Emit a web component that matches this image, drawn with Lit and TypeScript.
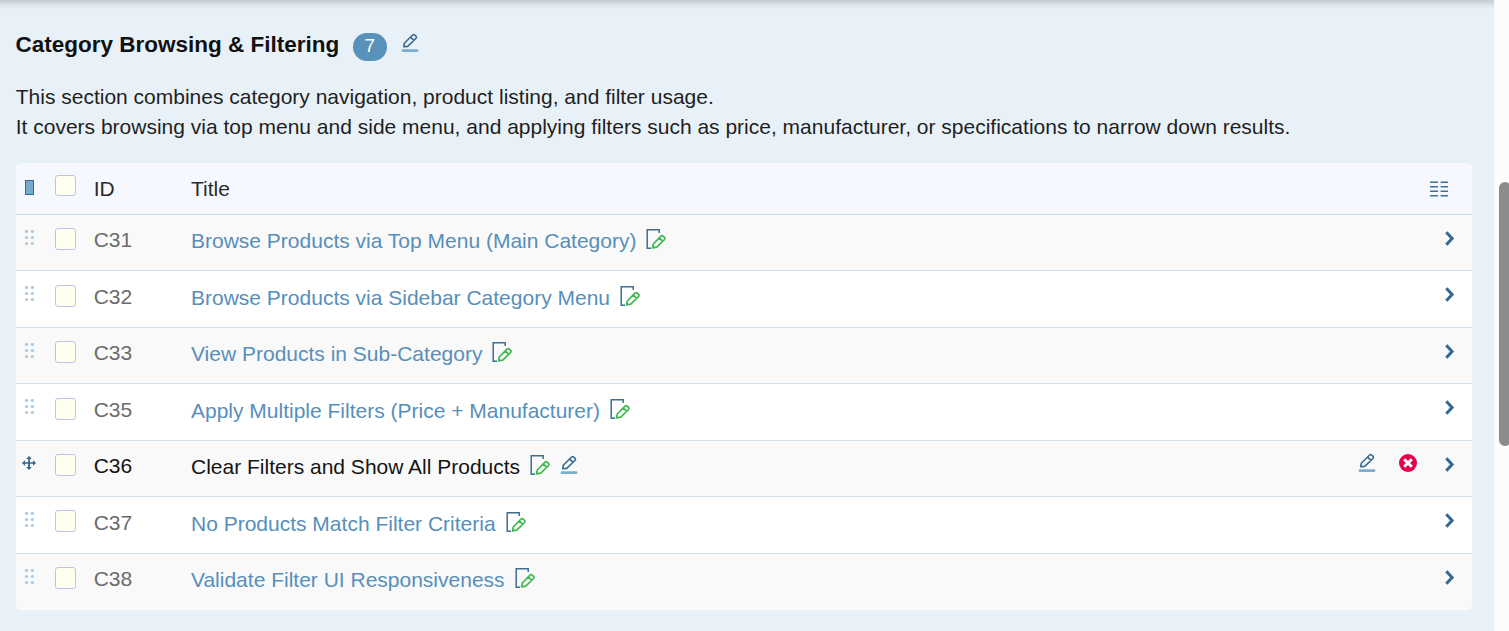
import { LitElement, html, css, svg, nothing } from "lit";
import { customElement, property } from "lit/decorators.js";

interface TestCase {
  id: string;
  title: string;
  active?: boolean;
}

const CASES: TestCase[] = [
  { id: "C31", title: "Browse Products via Top Menu (Main Category)" },
  { id: "C32", title: "Browse Products via Sidebar Category Menu" },
  { id: "C33", title: "View Products in Sub-Category" },
  { id: "C35", title: "Apply Multiple Filters (Price + Manufacturer)" },
  { id: "C36", title: "Clear Filters and Show All Products", active: true },
  { id: "C37", title: "No Products Match Filter Criteria" },
  { id: "C38", title: "Validate Filter UI Responsiveness" },
];

const pencil = html`<svg width="18" height="20" viewBox="0 0 18 20" fill="none">
  <path d="M2.8 13.8 3.3 10.2 11.6 2Q12.6 1.1 13.6 2L15.1 3.4Q16 4.3 15.1 5.2L6.7 13.4Z M9.6 4.2 13 7.4" stroke="#3a6a8e" stroke-width="1.6" stroke-linejoin="round"/>
  <path d="M2 17.6H16" stroke="#7badcf" stroke-width="2.8" stroke-linecap="round"/>
</svg>`;

const sheet = html`<svg width="22" height="22" viewBox="0 0 22 22" fill="none">
  <path d="M6 20.2H2.2V1.8H14.2V5" stroke="#3f6d92" stroke-width="1.5"/>
  <path d="M7.6 19.8 8.3 16 16 8.2Q17.1 7.2 18.2 8.2L19.6 9.5Q20.6 10.5 19.6 11.5L11.7 19.2Z M14.2 10 17.8 13.4" stroke="#3dbb50" stroke-width="1.75" stroke-linejoin="round"/>
</svg>`;

const chevron = html`<svg width="12" height="18" viewBox="0 0 12 18" fill="none">
  <path d="M2.3 2.3 8.1 8.5 2.3 14.7" stroke="#346891" stroke-width="3"/>
</svg>`;

const remove = html`<svg width="18" height="18" viewBox="0 0 18 18">
  <circle cx="9" cy="9" r="9" fill="#e4004b"/>
  <path d="M5.2 5.2 12.8 12.8M12.8 5.2 5.2 12.8" stroke="#fff" stroke-width="3"/>
</svg>`;

const columns = html`<svg width="18" height="16" viewBox="0 0 18 16">
  ${[0.4, 5, 9.4, 13.9].map(
    (y) => svg`<path d=${`M0 ${y}h8v1.6h-8zM10.6 ${y}h7.4v1.6h-7.4z`} fill="#3f7096"/>`,
  )}
</svg>`;

const grip = html`<svg width="10" height="16" viewBox="0 0 10 16" fill="#a9cbe2">
  ${[1.5, 7.5, 13.5].map((y) => svg`<circle cx="2.5" cy=${y} r="1.6"/><circle cx="8.4" cy=${y} r="1.6"/>`)}
</svg>`;

const move = html`<svg width="14" height="14" viewBox="0 0 14 14">
  <path d="M7 1.5V12.5M1.5 7H12.5" stroke="#336389" stroke-width="1.7"/>
  <path d="M7 0 9.7 3H4.3ZM7 14 9.7 11H4.3ZM0 7 3 4.3V9.7ZM14 7 11 4.3V9.7Z" fill="#336389"/>
</svg>`;

@customElement("case-row")
class CaseRow extends LitElement {
  @property({ attribute: false }) item!: TestCase;

  static styles = css`
    :host { display: block; }
    svg { display: block; flex: none; }
    .row {
      box-sizing: border-box;
      height: 56.45px;
      display: grid;
      grid-template-columns: 39px 38.7px 97.3px 1fr auto;
      align-items: start;
      border-bottom: 1px solid #d2e0eb;
      font-size: 21px;
      line-height: 24px;
    }
    :host(:last-of-type) .row { border-bottom-color: #fdfdfd; }
    .handle { padding: 15px 0 0 8px; }
    .handle.active { padding: 15px 0 0 6px; }
    .check {
      box-sizing: border-box;
      width: 21px;
      height: 22px;
      margin-top: 13.2px;
      border: 1px solid #b9c4ee;
      border-radius: 3px;
      background: #fffff0;
    }
    .id { padding-top: 13.45px; color: #6b6b6b; }
    .title { display: flex; padding-top: 14.45px; color: #578fba; white-space: nowrap; }
    .sheet { margin: -1px 0 0 9px; }
    .edit { margin: 0 0 0 9px; }
    .active .id, .active .title { color: #141414; }
    .actions { display: flex; padding-right: 16px; }
    .pen { margin: 12px 23px 0 0; }
    .del { margin: 13px 27px 0 0; }
    .next { margin-top: 15px; }
  `;

  render() {
    const { id, title, active } = this.item;
    return html`<div class="row ${active ? "active" : ""}">
      <div class="handle ${active ? "active" : ""}">${active ? move : grip}</div>
      <div class="check"></div>
      <div class="id">${id}</div>
      <div class="title">
        <span>${title}</span>
        <span class="sheet">${sheet}</span>
        ${active ? html`<span class="edit">${pencil}</span>` : nothing}
      </div>
      <div class="actions">
        ${active ? html`<span class="pen">${pencil}</span><span class="del">${remove}</span>` : nothing}
        <span class="next">${chevron}</span>
      </div>
    </div>`;
  }
}

@customElement("app-root")
class AppRoot extends LitElement {
  static styles = css`
    :host {
      display: flex;
      height: 631px;
      overflow: hidden;
      font-family: "Liberation Sans", Arial, sans-serif;
      color: #1f1f1f;
      background: #fcfcfc;
    }
    svg { display: block; flex: none; }
    .page {
      box-sizing: border-box;
      width: 1494px;
      height: 631px;
      padding: 30px 22px 0 16px;
      background: linear-gradient(#c3c8d1 0, #d3d9e1 3px, #e2e8f0 6px, #e9f1f8 10px);
    }
    .heading { display: flex; height: 31px; align-items: flex-start; }
    h2 { margin: 0 0 0 -0.5px; font-size: 22.5px; line-height: 29px; color: #111; white-space: nowrap; }
    .count {
      width: 34px;
      height: 28px;
      margin: 3px 14px 0 13.5px;
      border-radius: 14px;
      background: #5892bb;
      color: #fff;
      font-size: 19px;
      line-height: 26px;
      text-align: center;
    }
    .edit { margin-top: 3px; }
    .intro { margin: 21px 0 0 -0.3px; font-size: 21px; line-height: 30px; white-space: nowrap; }
    .table { margin-top: 21px; width: 1456px; border-radius: 5px; overflow: hidden; background: #fff; }
    .head {
      box-sizing: border-box;
      height: 52px;
      display: grid;
      grid-template-columns: 39px 38.7px 97.3px 1fr auto;
      border-bottom: 1px solid #c9dfe9;
      background: #f5f9ff;
      font-size: 21px;
      line-height: 24px;
      color: #2b2b2b;
    }
    .marker {
      box-sizing: border-box;
      width: 9px;
      height: 15px;
      margin: 17px 0 0 9px;
      border: 1px solid #356a90;
      background: #77a9cd;
    }
    .check {
      box-sizing: border-box;
      width: 21px;
      height: 21px;
      margin-top: 12px;
      border: 1px solid #b9c4ee;
      border-radius: 3px;
      background: #fffff0;
    }
    .label { padding-top: 14px; }
    .cols { padding: 18px 24px 0 0; }
    case-row:nth-child(even) { background: #f9f9f9; }
    .scroll { width: 15px; padding: 182px 0 0 5px; box-sizing: border-box; overflow: hidden; }
    .thumb { width: 12px; height: 264px; border-radius: 6px; background: #8b8b8b; }
  `;

  render() {
    return html`
      <main class="page">
        <div class="heading">
          <h2>Category Browsing &amp; Filtering</h2>
          <span class="count">${CASES.length}</span>
          <span class="edit">${pencil}</span>
        </div>
        <p class="intro">
          This section combines category navigation, product listing, and filter usage.<br />
          It covers browsing via top menu and side menu, and applying filters such as price,
          manufacturer, or specifications to narrow down results.
        </p>
        <section class="table">
          <div class="head">
            <div class="marker"></div>
            <div class="check"></div>
            <div class="label">ID</div>
            <div class="label">Title</div>
            <div class="cols">${columns}</div>
          </div>
          ${CASES.map((c) => html`<case-row .item=${c}></case-row>`)}
        </section>
      </main>
      <div class="scroll"><div class="thumb"></div></div>
    `;
  }
}
